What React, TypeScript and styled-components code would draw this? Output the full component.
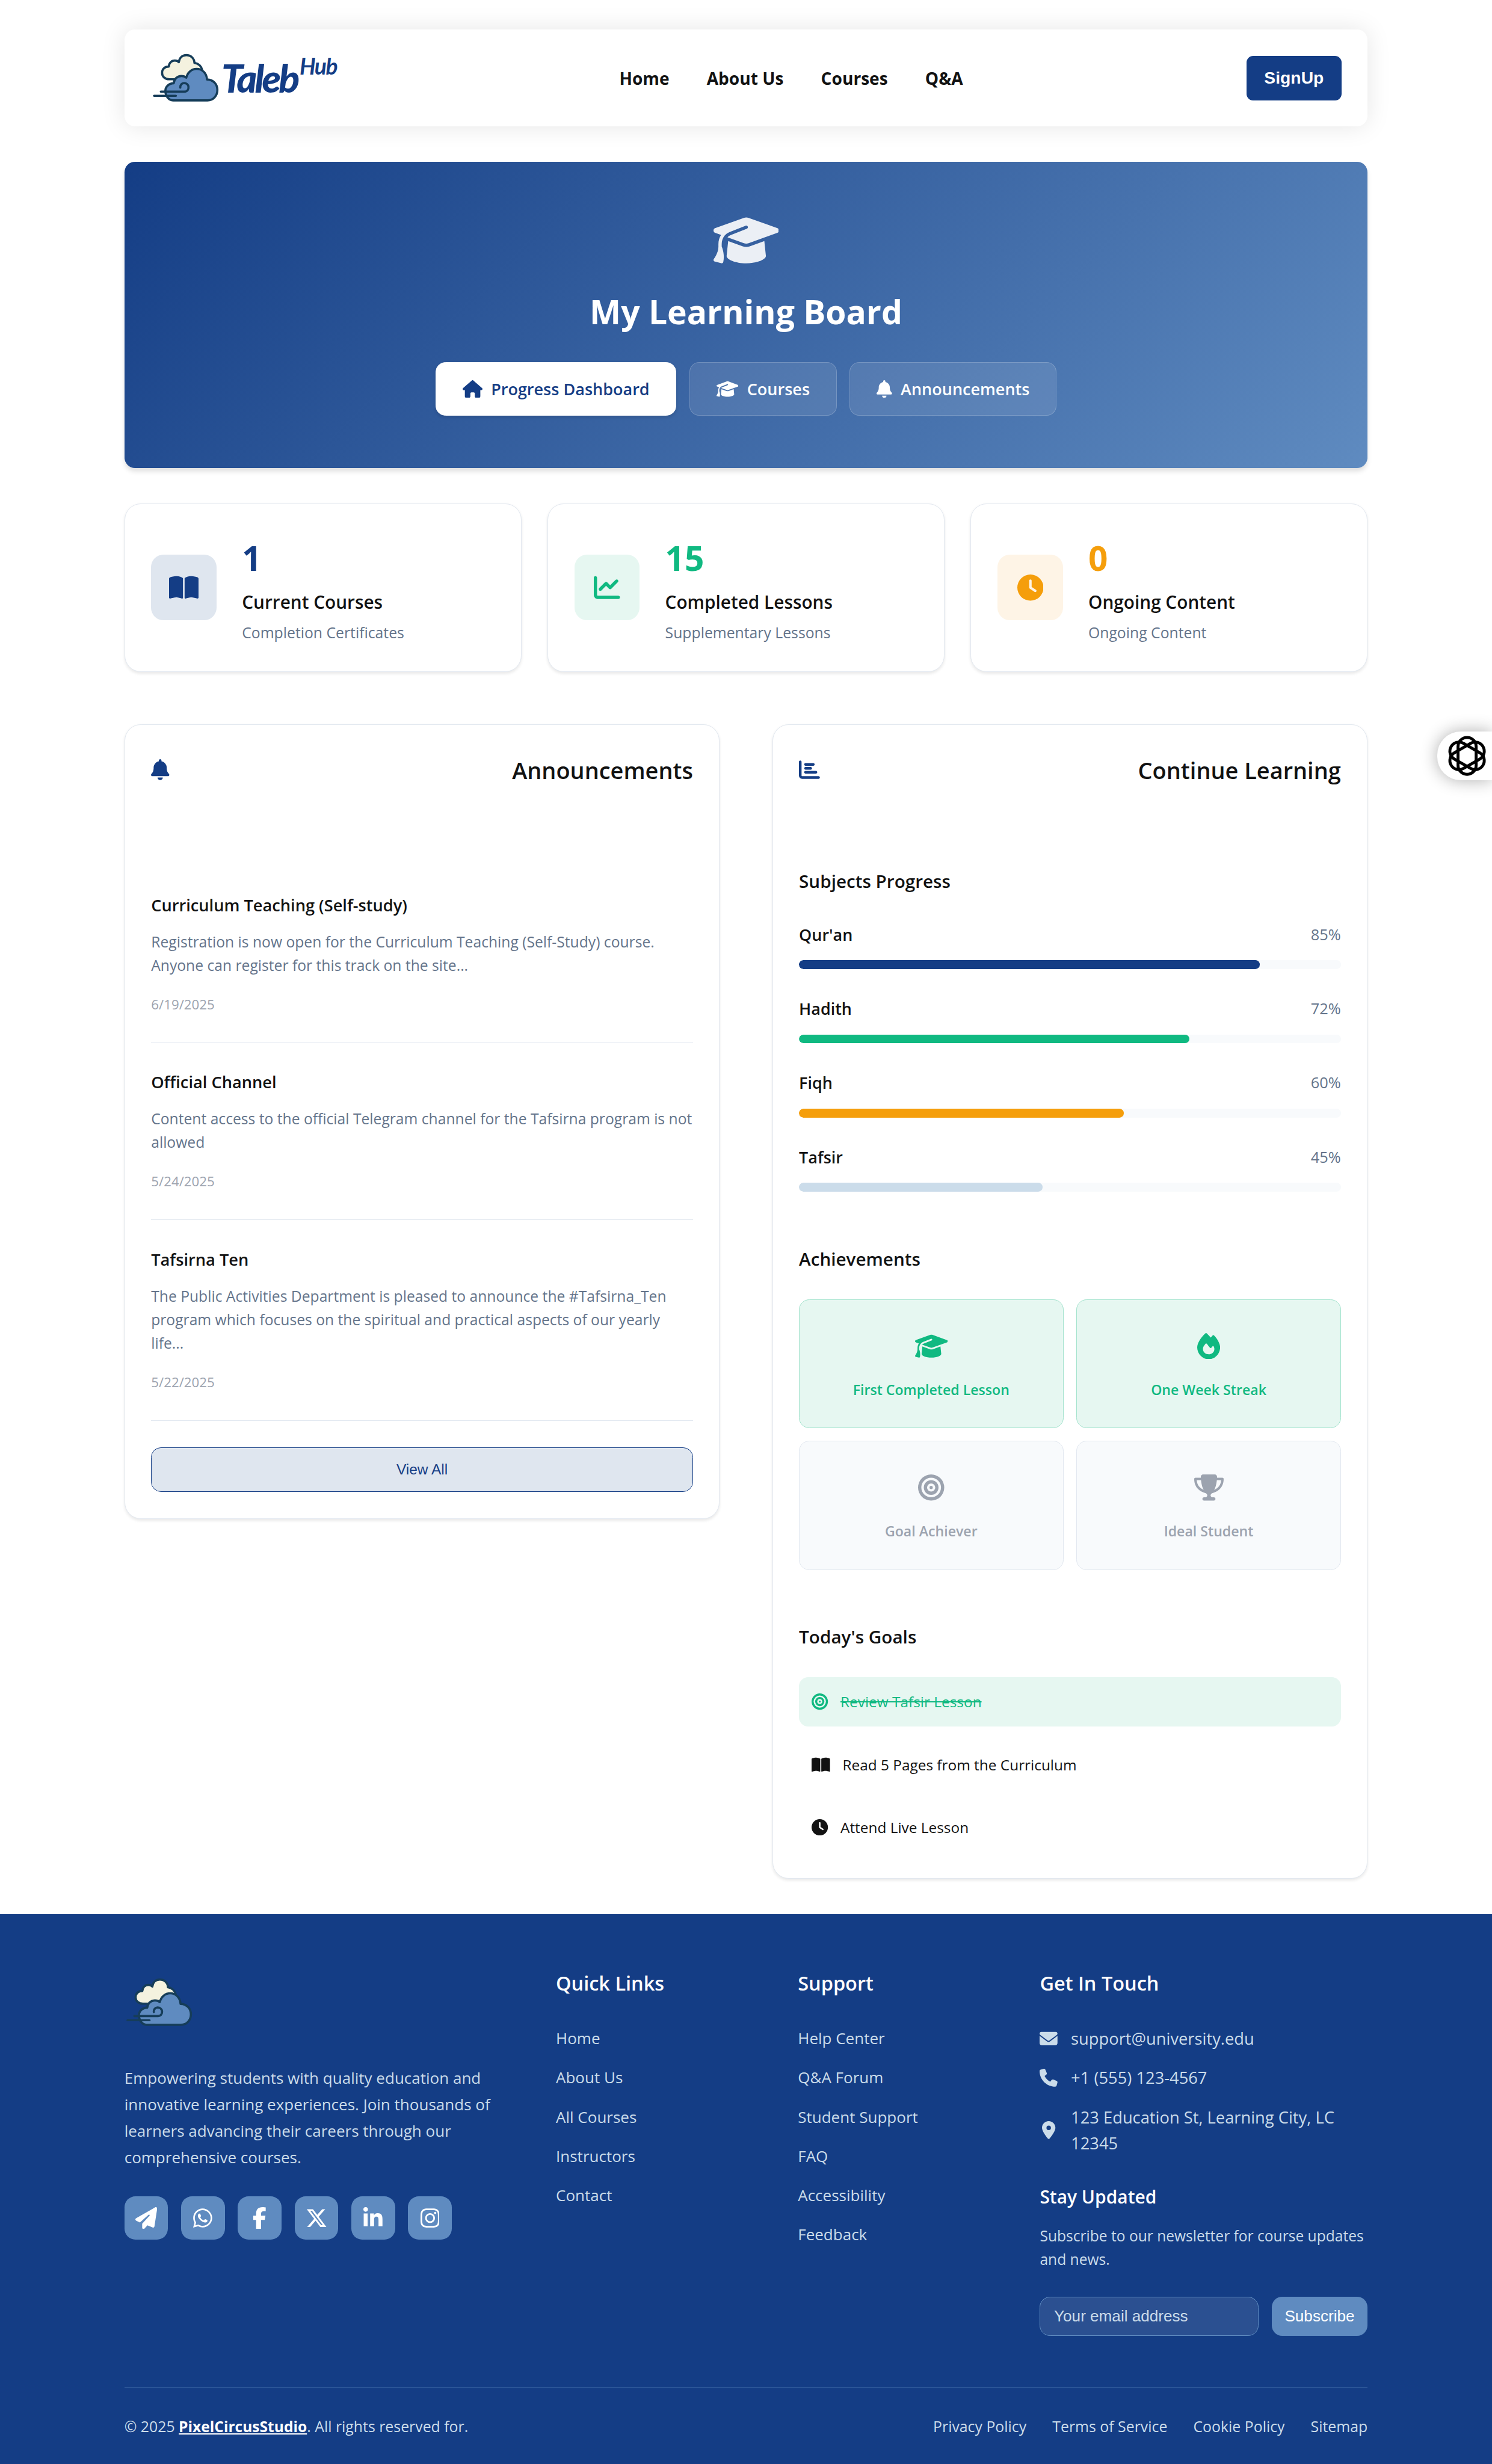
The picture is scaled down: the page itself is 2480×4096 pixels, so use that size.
import React from "react";
import styled, { createGlobalStyle, css } from "styled-components";
import {
  FaBell,
  FaBookOpen,
  FaBullseye,
  FaChartBar,
  FaChartLine,
  FaClock,
  FaEnvelope,
  FaFacebookF,
  FaFire,
  FaGraduationCap,
  FaHouse,
  FaInstagram,
  FaLinkedinIn,
  FaLocationDot,
  FaPaperPlane,
  FaPhone,
  FaTrophy,
  FaWhatsapp,
  FaXTwitter,
} from "react-icons/fa6";

const color = {
  primary: "#143d85",
  accent: "#5f8bc0",
  pale: "#cbdcea",
  ink: "#121212",
  muted: "#64748b",
  faint: "#9ca3af",
  line: "#e2e8f0",
  surface: "#f8fafc",
  green: "#10b981",
  greenSoft: "#e6f7f1",
  amber: "#f59e0b",
  amberSoft: "#fef4e6",
  blueSoft: "#dfe6ef",
};

const Global = createGlobalStyle`
  html { font-size: 9.071px; overflow: hidden; }
  body {
    margin: 0;
    background: #fff;
    color: ${color.ink};
    font-family: "Open Sans", "Noto Sans", sans-serif;
  }
  *, *::before, *::after { box-sizing: border-box; }
  h1, h2, h3, h4, p, ul { margin: 0; padding: 0; font-weight: inherit; }
  ul { list-style: none; }
  a { color: inherit; text-decoration: none; }
  svg { display: block; flex: none; }
`;

/* $size is the icon height in rem, $grid the width of its 512-unit-high drawing grid. */
const Glyph = styled.span<{ $size: number; $grid?: number }>`
  display: inline-flex;
  flex: none;
  svg {
    height: ${(p) => p.$size}rem;
    width: ${(p) => (p.$size * (p.$grid ?? 512)) / 512}rem;
  }
`;

const container = css`
  width: 227.83rem;
  margin-left: auto;
  margin-right: auto;
`;

const Page = styled.div`
  width: 273.4rem;
  overflow: hidden;
`;

/* ---------- header ---------- */

const Header = styled.header`
  ${container}
  margin-top: 5.4rem;
  height: 17.8rem;
  padding: 0 4.75rem 0 5.2rem;
  display: flex;
  align-items: center;
  justify-content: space-between;
  background: #fff;
  border-radius: 1.9rem;
  box-shadow: 0 0 4.5rem rgba(0, 0, 0, 0.1);
`;

const Brand = styled.a`
  display: flex;
  align-items: center;
  width: 33.6rem;
`;

const CloudSvg = styled.svg`
  width: 12.1rem;
  height: 8.9rem;
  flex: none;
`;

const Wordmark = styled.span`
  margin-left: 0.5rem;
  font-family: Lato, sans-serif;
  font-style: italic;
  font-weight: 900;
  font-size: 7.1rem;
  line-height: 8.9rem;
  letter-spacing: -0.42rem;
  color: ${color.primary};
  white-space: nowrap;

  sup {
    margin-left: 0.4rem;
    font-size: 4.1rem;
    font-weight: 700;
    line-height: 0;
    letter-spacing: -0.17rem;
    vertical-align: 3.3rem;
  }
`;

const Nav = styled.nav`
  display: flex;
  gap: 6.85rem;
  font-size: 3.1rem;
  font-weight: 700;
`;

const SignUp = styled.button`
  width: 17.5rem;
  height: 8.2rem;
  border: 0;
  border-radius: 1.2rem;
  background: ${color.primary};
  color: #fff;
  font-family: "Liberation Sans", Arial, sans-serif;
  font-weight: 700;
  font-size: 3.12rem;
`;

/* ---------- hero ---------- */

const Hero = styled.section`
  ${container}
  margin-top: 6.5rem;
  height: 56.1rem;
  padding-top: 9.6rem;
  display: flex;
  flex-direction: column;
  align-items: center;
  color: #fff;
  border-radius: 1.9rem;
  background: linear-gradient(135deg, ${color.primary} 0%, ${color.accent} 100%);
  box-shadow: 0 0.6rem 0.9rem -0.15rem rgba(0, 0, 0, 0.14);

  > ${Glyph} {
    opacity: 0.9;
  }
`;

const HeroTitle = styled.h1`
  margin: 3.65rem 0 4.8rem;
  font-size: 6.09rem;
  line-height: 9rem;
  font-weight: 700;
`;

const Tabs = styled.div`
  display: flex;
  gap: 2.4rem;
`;

const Tab = styled.button<{ $active?: boolean }>`
  display: flex;
  align-items: center;
  gap: 1.6rem;
  height: 9.85rem;
  padding: 0 4.8rem;
  border: 0.15rem solid rgba(255, 255, 255, 0.2);
  border-radius: 1.8rem;
  background: rgba(255, 255, 255, 0.1);
  color: #fff;
  font-family: inherit;
  font-size: 2.98rem;
  font-weight: 600;
  white-space: nowrap;
  ${(p) =>
    p.$active &&
    css`
      background: #fff;
      border-color: #fff;
      color: ${color.primary};
      box-shadow: 0 0.3rem 0.6rem rgba(0, 0, 0, 0.12);
    `}
`;

/* ---------- cards ---------- */

const card = css`
  background: #fff;
  border: 0.15rem solid ${color.line};
  border-radius: 3rem;
  box-shadow: 0 0.3rem 0.6rem rgba(0, 0, 0, 0.09);
`;

const Stats = styled.section`
  ${container}
  margin-top: 6.5rem;
  display: grid;
  grid-template-columns: repeat(3, 1fr);
  gap: 4.8rem;
`;

const StatCard = styled.article`
  ${card}
  height: 30.8rem;
  padding: 0 4.8rem;
  display: flex;
  align-items: center;
  gap: 4.65rem;
`;

const StatTile = styled.div<{ $bg: string; $fg: string }>`
  display: grid;
  place-items: center;
  width: 12rem;
  height: 12rem;
  border-radius: 2.3rem;
  background: ${(p) => p.$bg};
  color: ${(p) => p.$fg};
`;

const StatNumber = styled.p<{ $fg: string }>`
  font-size: 6.25rem;
  line-height: 9.75rem;
  font-weight: 700;
  color: ${(p) => p.$fg};
`;

const StatLabel = styled.h3`
  margin-top: 0.9rem;
  font-size: 3.28rem;
  line-height: 4.8rem;
  font-weight: 600;
`;

const StatNote = styled.p`
  margin-top: 1rem;
  font-size: 2.73rem;
  line-height: 4.3rem;
  color: ${color.muted};
`;

const Columns = styled.section`
  ${container}
  margin-top: 9.6rem;
  display: grid;
  grid-template-columns: 1fr 1fr;
  align-items: start;
  gap: 9.6rem;
`;

const Panel = styled.article`
  ${card}
  padding: 5.28rem 4.8rem 4.8rem;
`;

const PanelHead = styled.header`
  display: flex;
  align-items: center;
  justify-content: space-between;

  ${Glyph} {
    color: ${color.primary};
  }

  h2 {
    font-size: 4.18rem;
    line-height: 6rem;
    font-weight: 600;
  }
`;

/* ---------- announcements ---------- */

const NewsList = styled.ul`
  margin-top: 14.6rem;
`;

const NewsItem = styled.li`
  padding: 5.01rem 0 5.08rem;
  border-bottom: 0.15rem solid ${color.line};

  h3 {
    font-size: 3rem;
    line-height: 4.5rem;
    font-weight: 600;
  }
  p {
    margin-top: 2.25rem;
    font-size: 2.72rem;
    line-height: 4.3rem;
    color: ${color.muted};
  }
  time {
    display: block;
    margin-top: 3.31rem;
    font-size: 2.46rem;
    line-height: 3.6rem;
    color: ${color.faint};
  }
`;

const ViewAll = styled.button`
  display: block;
  width: 100%;
  height: 8.2rem;
  margin-top: 4.85rem;
  border: 0.15rem solid ${color.primary};
  border-radius: 1.8rem;
  background: ${color.blueSoft};
  color: ${color.primary};
  font-family: "Liberation Sans", Arial, sans-serif;
  font-size: 2.7rem;
`;

/* ---------- learning ---------- */

const SectionTitle = styled.h3<{ $top: number; $bottom: number }>`
  margin: ${(p) => p.$top}rem 0 ${(p) => p.$bottom}rem;
  font-size: 3.27rem;
  line-height: 4.8rem;
  font-weight: 600;
`;

const Subjects = styled.div`
  display: grid;
  gap: 5.07rem;
`;

const SubjectHead = styled.div`
  display: flex;
  justify-content: space-between;
  height: 4.5rem;
  margin-bottom: 2.43rem;
  font-weight: 600;
  font-size: 2.97rem;
  line-height: 4.5rem;

  span:last-child {
    font-weight: 500;
    font-size: 2.8rem;
    line-height: 4.2rem;
    color: ${color.muted};
  }
`;

const Track = styled.div`
  height: 1.6rem;
  border-radius: 0.8rem;
  background: ${color.surface};
  overflow: hidden;
`;

const Fill = styled.div<{ $bg: string }>`
  height: 100%;
  border-radius: 0.8rem;
  background: ${(p) => p.$bg};
`;

const Badges = styled.div`
  display: grid;
  grid-template-columns: 1fr 1fr;
  gap: 2.4rem;
`;

const Badge = styled.div<{ $earned: boolean }>`
  display: flex;
  flex-direction: column;
  align-items: center;
  height: 23.6rem;
  padding-top: 6.05rem;
  gap: 3.7rem;
  border: 0.15rem solid ${(p) => (p.$earned ? "#a3e3cd" : color.line)};
  border-radius: 1.9rem;
  background: ${(p) => (p.$earned ? color.greenSoft : color.surface)};
  color: ${(p) => (p.$earned ? color.green : color.faint)};
  font-size: 2.55rem;
  line-height: 3.8rem;
  font-weight: 600;
`;

const Goals = styled.ul`
  display: grid;
  gap: 2.44rem;
`;

const Goal = styled.li<{ $done?: boolean }>`
  display: flex;
  align-items: center;
  gap: 2.25rem;
  height: 9.05rem;
  padding: 0 2.35rem;
  border-radius: 1.7rem;
  font-size: 2.69rem;
  ${(p) =>
    p.$done &&
    css`
      background: ${color.greenSoft};
      color: ${color.green};
      span:last-child {
        text-decoration: line-through;
      }
    `}
`;

/* ---------- footer ---------- */

const Footer = styled.footer`
  margin-top: 6.5rem;
  padding: 10.1rem 0 4.8rem;
  background: ${color.primary};
  color: ${color.pale};
`;

const FooterGrid = styled.div`
  ${container}
  display: grid;
  grid-template-columns: 69.48rem 34.74rem 34.74rem minmax(0, 1fr);
  column-gap: 9.6rem;
`;

const About = styled.div`
  ${CloudSvg} {
    margin: 1.55rem 0 7rem 0.4rem;
  }
  p {
    font-size: 2.87rem;
    line-height: 4.86rem;
  }
`;

const Socials = styled.div`
  display: flex;
  gap: 2.4rem;
  margin-top: 4.7rem;
`;

const Social = styled.a`
  display: grid;
  place-items: center;
  width: 8rem;
  height: 8rem;
  border-radius: 2rem;
  background: ${color.accent};
  color: #fff;
`;

const FootTitle = styled.h4`
  margin-bottom: 4.9rem;
  font-size: 3.58rem;
  line-height: 5.4rem;
  font-weight: 600;
  color: #fff;
`;

const Links = styled.ul`
  display: grid;
  gap: 2.4rem;
  font-size: 2.87rem;
  line-height: 4.8rem;
`;

const Contact = styled.ul`
  display: grid;
  gap: 2.4rem;

  li {
    display: flex;
    align-items: center;
    gap: 2.4rem;
    font-size: 3.01rem;
    line-height: 4.8rem;
  }
  ${Glyph} {
    width: 3.3rem;
    justify-content: center;
  }
`;

const Newsletter = styled.div`
  margin-top: 4.85rem;

  h5 {
    margin: 0 0 2.5rem;
    font-size: 3.3rem;
    line-height: 5rem;
    font-weight: 600;
    color: #fff;
  }
  p {
    font-size: 2.71rem;
    line-height: 4.3rem;
  }
`;

const Form = styled.form`
  display: flex;
  gap: 2.4rem;
  margin-top: 4.8rem;
  height: 7.1rem;
`;

const EmailInput = styled.input`
  flex: 1;
  min-width: 0;
  padding: 0 2.5rem;
  border: 0.15rem solid ${color.accent};
  border-radius: 1.9rem;
  background: rgba(255, 255, 255, 0.1);
  font-family: "Liberation Sans", Arial, sans-serif;
  font-size: 2.88rem;
  &::placeholder {
    color: ${color.pale};
    opacity: 1;
  }
`;

const Subscribe = styled.button`
  width: 17.6rem;
  padding: 0;
  border: 0;
  border-radius: 1.9rem;
  background: ${color.accent};
  color: #fff;
  font-family: "Liberation Sans", Arial, sans-serif;
  font-size: 2.88rem;
`;

const Legal = styled.div`
  ${container}
  display: flex;
  justify-content: space-between;
  margin-top: 9.5rem;
  padding-top: 4.85rem;
  border-top: 0.15rem solid ${color.accent};
  font-size: 2.74rem;
  line-height: 4.3rem;

  b {
    font-size: 2.71rem;
    color: #fff;
    text-decoration: underline;
  }
  nav {
    display: flex;
    gap: 4.75rem;
  }
`;

/* ---------- floating assistant tab ---------- */

const Assistant = styled.button`
  position: fixed;
  top: 134.1rem;
  right: 0;
  display: flex;
  align-items: center;
  width: 10rem;
  height: 8.9rem;
  padding: 0 0 0 1.7rem;
  border: 0;
  border-radius: 4.3rem 0 0 4.3rem;
  background: #fff;
  box-shadow: 0 0 3rem rgba(0, 0, 0, 0.32);

  svg {
    width: 7.4rem;
    height: 7.4rem;
  }
`;

const Cloud = () => (
  <CloudSvg viewBox="59 58 363 264" fill="none" strokeWidth="12" strokeLinejoin="round" strokeLinecap="round">
    <g stroke="#163d59">
      <path
        fill="#f4f2df"
        d="M180 198 H150 C124 198 110 182 110 163 C110 141 126 128 147 128 C148 107 163 95 180 95 C189 95 197 98 202 104 C205 80 221 65 243 65 C268 65 287 83 288 108 C312 112 326 128 331 148 L300 200 Z"
      />
      <path
        fill={color.accent}
        d="M170 314 C146 314 129 290 128 262 C128 240 146 221 174 220 C176 196 194 180 216 180 C227 180 237 184 243 189 C250 160 272 141 300 141 C332 141 355 166 357 199 C391 200 414 225 414 257 C414 290 390 314 360 314 Z"
      />
      <path d="M103 266 H232 C250 266 257 252 255 238 C253 226 243 219 231 219 C218 219 209 229 210 244" />
      <path d="M66 289 H186" />
    </g>
  </CloudSvg>
);

const Knot = () => (
  <svg viewBox="-37 -37 74 74" fill="none" stroke="#000" strokeWidth="5.4">
    {[0, 60, 120].map((a) => (
      <rect key={a} x="-16.6" y="-33.8" width="33.2" height="67.6" rx="16.6" transform={`rotate(${a})`} />
    ))}
  </svg>
);

const stats = [
  { n: "1", label: "Current Courses", note: "Completion Certificates", icon: <FaBookOpen />, grid: 576, fg: color.primary, bg: color.blueSoft },
  { n: "15", label: "Completed Lessons", note: "Supplementary Lessons", icon: <FaChartLine />, grid: 512, fg: color.green, bg: color.greenSoft },
  { n: "0", label: "Ongoing Content", note: "Ongoing Content", icon: <FaClock />, grid: 512, fg: color.amber, bg: color.amberSoft },
];

const news = [
  {
    title: "Curriculum Teaching (Self-study)",
    lines: ["Registration is now open for the Curriculum Teaching (Self-Study) course.", "Anyone can register for this track on the site..."],
    date: "6/19/2025",
  },
  {
    title: "Official Channel",
    lines: ["Content access to the official Telegram channel for the Tafsirna program is not", "allowed"],
    date: "5/24/2025",
  },
  {
    title: "Tafsirna Ten",
    lines: [
      "The Public Activities Department is pleased to announce the #Tafsirna_Ten",
      "program which focuses on the spiritual and practical aspects of our yearly",
      "life...",
    ],
    date: "5/22/2025",
  },
];

const subjects = [
  { name: "Qur'an", value: 85, bg: color.primary },
  { name: "Hadith", value: 72, bg: color.green },
  { name: "Fiqh", value: 60, bg: color.amber },
  { name: "Tafsir", value: 45, bg: color.pale },
];

const badges = [
  { label: "First Completed Lesson", icon: <FaGraduationCap />, grid: 640, earned: true },
  { label: "One Week Streak", icon: <FaFire />, grid: 448, earned: true },
  { label: "Goal Achiever", icon: <FaBullseye />, grid: 512, earned: false },
  { label: "Ideal Student", icon: <FaTrophy />, grid: 576, earned: false },
];

const socials = [
  { Icon: FaPaperPlane, grid: 512 },
  { Icon: FaWhatsapp, grid: 448 },
  { Icon: FaFacebookF, grid: 320 },
  { Icon: FaXTwitter, grid: 512 },
  { Icon: FaLinkedinIn, grid: 448 },
  { Icon: FaInstagram, grid: 448 },
];

const Lines = ({ text }: { text: string[] }) => (
  <>
    {text.map((t, i) => (
      <React.Fragment key={t}>
        {i > 0 && <br />}
        {t}
      </React.Fragment>
    ))}
  </>
);

const LinkColumn = ({ title, items }: { title: string; items: string[] }) => (
  <div>
    <FootTitle>{title}</FootTitle>
    <Links>
      {items.map((t) => (
        <li key={t}>
          <a href="#">{t}</a>
        </li>
      ))}
    </Links>
  </div>
);

export default function App() {
  return (
    <Page>
      <Global />
      <Header>
        <Brand href="#">
          <Cloud />
          <Wordmark>
            Taleb<sup>Hub</sup>
          </Wordmark>
        </Brand>
        <Nav>
          {["Home", "About Us", "Courses", "Q&A"].map((t) => (
            <a href="#" key={t}>
              {t}
            </a>
          ))}
        </Nav>
        <SignUp>SignUp</SignUp>
      </Header>

      <Hero>
        <Glyph $size={9.6} $grid={640}>
          <FaGraduationCap />
        </Glyph>
        <HeroTitle>My Learning Board</HeroTitle>
        <Tabs>
          <Tab $active>
            <Glyph $size={3.24} $grid={576}>
              <FaHouse />
            </Glyph>
            Progress Dashboard
          </Tab>
          <Tab>
            <Glyph $size={3.24} $grid={640}>
              <FaGraduationCap />
            </Glyph>
            Courses
          </Tab>
          <Tab>
            <Glyph $size={3.24} $grid={448}>
              <FaBell />
            </Glyph>
            Announcements
          </Tab>
        </Tabs>
      </Hero>

      <Stats>
        {stats.map((s) => (
          <StatCard key={s.label}>
            <StatTile $bg={s.bg} $fg={s.fg}>
              <Glyph $size={4.8} $grid={s.grid}>
                {s.icon}
              </Glyph>
            </StatTile>
            <div>
              <StatNumber $fg={s.fg}>{s.n}</StatNumber>
              <StatLabel>{s.label}</StatLabel>
              <StatNote>{s.note}</StatNote>
            </div>
          </StatCard>
        ))}
      </Stats>

      <Columns>
        <Panel>
          <PanelHead>
            <Glyph $size={3.84} $grid={448}>
              <FaBell />
            </Glyph>
            <h2>Announcements</h2>
          </PanelHead>
          <NewsList>
            {news.map((n) => (
              <NewsItem key={n.title}>
                <h3>{n.title}</h3>
                <p>
                  <Lines text={n.lines} />
                </p>
                <time>{n.date}</time>
              </NewsItem>
            ))}
          </NewsList>
          <ViewAll>View All</ViewAll>
        </Panel>

        <Panel>
          <PanelHead>
            <Glyph $size={3.84}>
              <FaChartBar />
            </Glyph>
            <h2>Continue Learning</h2>
          </PanelHead>

          <SectionTitle $top={14.96} $bottom={5.23}>
            Subjects Progress
          </SectionTitle>
          <Subjects>
            {subjects.map((s) => (
              <div key={s.name}>
                <SubjectHead>
                  <span>{s.name}</span>
                  <span>{s.value}%</span>
                </SubjectHead>
                <Track>
                  <Fill $bg={s.bg} style={{ width: `${s.value}%` }} />
                </Track>
              </div>
            ))}
          </Subjects>

          <SectionTitle $top={9.9} $bottom={5}>
            Achievements
          </SectionTitle>
          <Badges>
            {badges.map((b) => (
              <Badge key={b.label} $earned={b.earned}>
                <Glyph $size={4.8} $grid={b.grid}>
                  {b.icon}
                </Glyph>
                {b.label}
              </Badge>
            ))}
          </Badges>

          <SectionTitle $top={9.88} $bottom={4.98}>
            Today's Goals
          </SectionTitle>
          <Goals>
            <Goal $done>
              <Glyph $size={3}>
                <FaBullseye />
              </Glyph>
              <span>Review Tafsir Lesson</span>
            </Goal>
            <Goal>
              <Glyph $size={3} $grid={576}>
                <FaBookOpen />
              </Glyph>
              <span>Read 5 Pages from the Curriculum</span>
            </Goal>
            <Goal>
              <Glyph $size={3}>
                <FaClock />
              </Glyph>
              <span>Attend Live Lesson</span>
            </Goal>
          </Goals>
        </Panel>
      </Columns>

      <Footer>
        <FooterGrid>
          <About>
            <Cloud />
            <p>
              <Lines
                text={[
                  "Empowering students with quality education and",
                  "innovative learning experiences. Join thousands of",
                  "learners advancing their careers through our",
                  "comprehensive courses.",
                ]}
              />
            </p>
            <Socials>
              {socials.map(({ Icon, grid }, i) => (
                <Social href="#" key={i}>
                  <Glyph $size={4} $grid={grid}>
                    <Icon />
                  </Glyph>
                </Social>
              ))}
            </Socials>
          </About>
          <LinkColumn title="Quick Links" items={["Home", "About Us", "All Courses", "Instructors", "Contact"]} />
          <LinkColumn
            title="Support"
            items={["Help Center", "Q&A Forum", "Student Support", "FAQ", "Accessibility", "Feedback"]}
          />
          <div>
            <FootTitle>Get In Touch</FootTitle>
            <Contact>
              <li>
                <Glyph $size={3.28}>
                  <FaEnvelope />
                </Glyph>
                <span>support@university.edu</span>
              </li>
              <li>
                <Glyph $size={3.28}>
                  <FaPhone />
                </Glyph>
                <span>+1 (555) 123-4567</span>
              </li>
              <li>
                <Glyph $size={3.28} $grid={384}>
                  <FaLocationDot />
                </Glyph>
                <span>
                  <Lines text={["123 Education St, Learning City, LC", "12345"]} />
                </span>
              </li>
            </Contact>
            <Newsletter>
              <h5>Stay Updated</h5>
              <p>
                <Lines text={["Subscribe to our newsletter for course updates", "and news."]} />
              </p>
              <Form>
                <EmailInput placeholder="Your email address" />
                <Subscribe type="button">Subscribe</Subscribe>
              </Form>
            </Newsletter>
          </div>
        </FooterGrid>
        <Legal>
          <span>
            © 2025 <b>PixelCircusStudio</b>. All rights reserved for.
          </span>
          <nav>
            {["Privacy Policy", "Terms of Service", "Cookie Policy", "Sitemap"].map((t) => (
              <a href="#" key={t}>
                {t}
              </a>
            ))}
          </nav>
        </Legal>
      </Footer>

      <Assistant aria-label="Assistant">
        <Knot />
      </Assistant>
    </Page>
  );
}
